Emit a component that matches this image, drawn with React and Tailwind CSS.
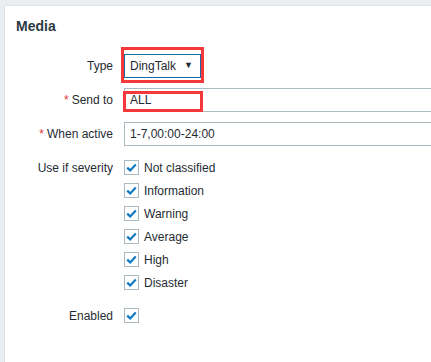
const severities = ["Not classified", "Information", "Warning", "Average", "High", "Disaster"];

const Check = () => (
  <span className="flex h-[15px] w-[15px] shrink-0 items-center justify-center border border-[#acbbc2] bg-white">
    <svg width="11" height="9" viewBox="0 0 11 9">
      <path d="M1.2 4.6 L4.2 7.4 L9.8 1.6" fill="none" stroke="#0f78c0" strokeWidth="2.2" />
    </svg>
  </span>
);

const Label = ({ children, required }) => (
  <div className="flex h-[24px] items-center justify-end whitespace-nowrap text-right">
    {required && <span className="mr-[3px] text-[#e33734]">*</span>}
    {children}
  </div>
);

export default function App() {
  return (
    <div
      className="h-[362px] w-[431px] overflow-hidden bg-[#ebeef0] pl-[4px] pt-[5px] text-[12px] text-[#1f2c33]"
      style={{ fontFamily: "Arial, 'Liberation Sans', sans-serif" }}
    >
      <div className="h-[400px] w-[500px] border-l border-t border-[#dde2e5] bg-white pl-[11px] pt-[11px]">
        <h2 className="h-[18px] text-[14px] font-bold leading-[18px] text-[#2b3a44]">Media</h2>

        <div className="mt-[19px] grid grid-cols-[97px_1fr] gap-x-[11px] gap-y-[10px]">
          <Label>Type</Label>
          <div className="relative">
            <div className="flex h-[24px] w-[77px] items-center justify-between border border-[#1a6aa3] pl-[5px] pr-[7px]">
              <span>DingTalk</span>
              <span className="text-[9px]">▼</span>
            </div>
            <div className="absolute left-[-3px] top-[-7px] h-[36px] w-[83px] border-[3px] border-[#f6383b]" />
          </div>

          <Label required>Send to</Label>
          <div className="relative">
            <div className="flex h-[24px] w-[330px] items-center border border-[#acbbc2] pl-[5px]">ALL</div>
            <div className="absolute left-[-1px] top-[3px] h-[21px] w-[80px] border-[3px] border-[#f6383b]" />
          </div>

          <Label required>When active</Label>
          <div className="flex h-[24px] w-[330px] items-center border border-[#acbbc2] pl-[5px]">1-7,00:00-24:00</div>

          <div className="flex h-[23px] items-center justify-end">Use if severity</div>
          <div className="flex flex-col">
            {severities.map((s) => (
              <label key={s} className="flex h-[23px] items-center gap-[5px]">
                <Check />
                <span>{s}</span>
              </label>
            ))}
          </div>

          <div className="flex h-[23px] items-center justify-end">Enabled</div>
          <div className="flex h-[23px] items-center">
            <Check />
          </div>
        </div>
      </div>
    </div>
  );
}
